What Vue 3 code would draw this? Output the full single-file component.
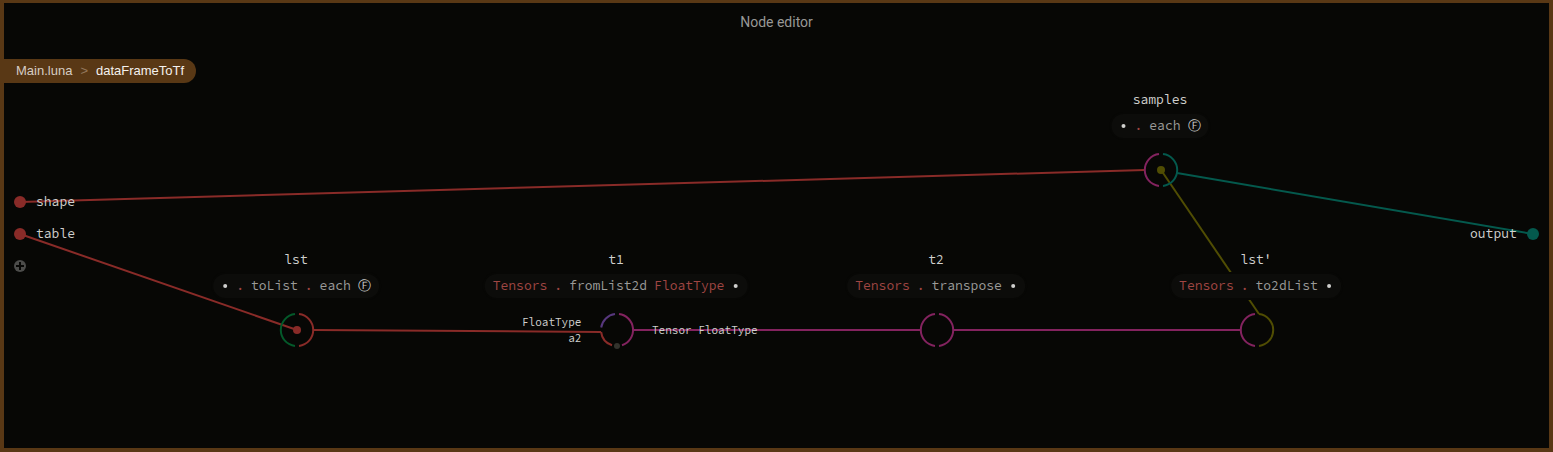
<script setup>
const wires = [
  { id: 'shape-samples', d: 'M20 202L1145 170', tone: 'red' },
  { id: 'table-lst', d: 'M20 234L297 330', tone: 'red' },
  { id: 'lst-t1', d: 'M313 330L601 332', tone: 'red' },
  { id: 't1-t2', d: 'M633 330H921', tone: 'magenta' },
  { id: 't2-lst', d: 'M953 330H1241', tone: 'magenta' },
  { id: 'samples-output', d: 'M1177 173L1533 234', tone: 'teal' },
  { id: 'lst-samples', d: 'M1161 170L1259 314', tone: 'olive' }
]

const leftArc = 'M-2 -15.9A16 16 0 0 0 -2 15.9'
const rightArc = 'M2 -15.9A16 16 0 0 1 2 15.9'

const rings = [
  { id: 'lst', x: 297, y: 330, arcs: [{ d: leftArc, tone: 'green' }, { d: rightArc, tone: 'red' }], dot: 'red' },
  {
    id: 't1', x: 617, y: 330,
    arcs: [
      { d: 'M-2 -15.9A16 16 0 0 0 -15.8 -2.5', tone: 'purple' },
      { d: 'M-15.9 2A16 16 0 0 0 -5 15.2', tone: 'red' },
      { d: 'M2 -15.9A16 16 0 0 1 5 15.2', tone: 'magenta' }
    ],
    self: true
  },
  { id: 't2', x: 937, y: 330, arcs: [{ d: leftArc, tone: 'magenta' }, { d: rightArc, tone: 'magenta' }] },
  { id: 'lst2', x: 1257, y: 330, arcs: [{ d: leftArc, tone: 'magenta' }, { d: rightArc, tone: 'olive' }] },
  { id: 'samples', x: 1161, y: 170, arcs: [{ d: leftArc, tone: 'magenta' }, { d: rightArc, tone: 'teal' }], dot: 'olive' }
]

const bullet = { kind: 'bullet' }
const fn = { kind: 'fn', text: 'Ⓕ' }
const dot = { kind: 'type', text: '.' }
const type = (text) => ({ kind: 'type', text })
const word = (text) => ({ kind: 'word', text })

const nodes = [
  { id: 'lst', name: 'lst', expr: [bullet, dot, word('toList'), dot, word('each'), fn] },
  { id: 't1', name: 't1', expr: [type('Tensors'), dot, word('fromList2d'), type('FloatType'), bullet] },
  { id: 't2', name: 't2', expr: [type('Tensors'), dot, word('transpose'), bullet] },
  { id: 'lst2', name: "lst'", expr: [type('Tensors'), dot, word('to2dList'), bullet] },
  { id: 'samples', name: 'samples', expr: [bullet, dot, word('each'), fn] }
]
</script>

<template>
  <div class="editor">
    <header class="title">Node editor</header>
    <nav class="crumbs" aria-label="Breadcrumb">
      <a href="#main">Main.luna</a>
      <span class="sep">&gt;</span>
      <a href="#current" class="current">dataFrameToTf</a>
    </nav>

    <main class="canvas">
      <svg class="graph" aria-hidden="true">
        <path v-for="w in wires" :key="w.id" :d="w.d" :class="['stroke', w.tone]" />
        <g v-for="r in rings" :key="r.id" :transform="`translate(${r.x} ${r.y})`">
          <path v-for="(a, i) in r.arcs" :key="i" :d="a.d" :class="['stroke', a.tone]" />
          <circle v-if="r.dot" r="4" :class="['fill', r.dot]" />
          <circle v-if="r.self" cy="16" r="3" class="fill grey" />
        </g>
        <circle cx="20" cy="202" r="6" class="fill red" />
        <circle cx="20" cy="234" r="6" class="fill red" />
        <circle cx="1533" cy="234" r="6" class="fill teal" />
      </svg>

      <section v-for="n in nodes" :key="n.id" :class="['node', 'at-' + n.id]">
        <h2 class="name">{{ n.name }}</h2>
        <div class="expr">
          <span v-for="(t, i) in n.expr" :key="i" :class="t.kind">{{ t.text }}</span>
        </div>
      </section>

      <span class="port at-shape">shape</span>
      <span class="port at-table">table</span>
      <span class="port at-output">output</span>
      <div class="hint at-inputs"><span>FloatType</span><span>a2</span></div>
      <div class="hint at-result">Tensor FloatType</div>

      <button class="add" type="button" aria-label="Add input">
        <svg width="12" height="12" viewBox="0 0 12 12">
          <circle cx="6" cy="6" r="6" class="disc" />
          <path d="M6 2V10M2 6H10" class="plus" />
        </svg>
      </button>
    </main>
  </div>
</template>

<style>
body {
  margin: 0;
  background: #070705;
}
</style>

<style scoped>
.editor {
  position: relative;
  min-height: 100vh;
  overflow: hidden;
  background: #070705;
  color: #d0d0ce;
  font-family: "Source Code Pro", "Noto Sans Mono CJK SC", "DejaVu Sans Mono", monospace;
  font-size: 13px;
  line-height: 16px;
}
.editor::after {
  content: "";
  position: absolute;
  inset: 0;
  border: 4px solid #593815;
  border-top-width: 3px;
  pointer-events: none;
}
.title {
  padding: 14px 0 29px;
  text-align: center;
  font-family: Roboto, sans-serif;
  font-size: 14px;
  color: #989896;
}
.crumbs {
  position: relative;
  z-index: 1;
  display: flex;
  align-items: center;
  gap: 8px;
  width: fit-content;
  height: 24px;
  padding: 0 12px 0 16px;
  border-radius: 0 12px 12px 0;
  background: #593815;
  font-family: "Liberation Sans", Arial, sans-serif;
}
.crumbs a {
  color: #d6cdc4;
  text-decoration: none;
}
.crumbs .current {
  color: #f4f1ee;
}
.sep {
  color: #94795d;
}
.canvas {
  position: absolute;
  inset: 0;
}
.graph {
  display: block;
  width: 100%;
  height: 100%;
}
.stroke {
  fill: none;
  stroke: currentColor;
  stroke-width: 2;
}
.fill {
  fill: currentColor;
}
.red { color: #892b28; }
.magenta { color: #83235f; }
.teal { color: #04594d; }
.olive { color: #504d03; }
.green { color: #04592a; }
.purple { color: #57377d; }
.grey { color: #33332d; }

.node {
  position: absolute;
  display: flex;
  flex-direction: column;
  align-items: center;
  gap: 6px;
  transform: translateX(-50%);
}
.name {
  margin: 0;
  font-size: 13px;
  font-weight: 400;
}
.expr {
  display: flex;
  align-items: center;
  gap: 7px;
  height: 24px;
  padding: 0 8px;
  border-radius: 12px;
  background: #0c0c0a;
  box-shadow: 0 0 0 2px #070705;
  white-space: nowrap;
}
.word { color: #9b9b99; }
.type { color: #a04643; }
.fn {
  color: #d0d0ce;
  font-family: "DejaVu Sans", sans-serif;
}
.bullet {
  width: 4px;
  height: 4px;
  margin: 0 2px;
  border-radius: 50%;
  background: #d0d0ce;
}
.at-lst { left: 296px; top: 252px; }
.at-t1 { left: 616px; top: 252px; }
.at-t2 { left: 936px; top: 252px; }
.at-lst2 { left: 1256px; top: 252px; }
.at-samples { left: 1160px; top: 92px; }

.port,
.hint,
.add {
  position: absolute;
}
.at-shape { left: 36px; top: 194px; }
.at-table { left: 36px; top: 226px; }
.at-output { left: 1470px; top: 226px; }
.hint {
  display: flex;
  flex-direction: column;
  align-items: flex-end;
  font-size: 11px;
}
.at-inputs { left: 522px; top: 314px; }
.at-result { left: 652px; top: 322px; }
.add {
  left: 14px;
  top: 260px;
  display: flex;
  padding: 0;
  border: 0;
  background: none;
  cursor: pointer;
}
.disc { fill: #4c4c4a; }
.plus {
  stroke: #070705;
  stroke-width: 2;
}
</style>
